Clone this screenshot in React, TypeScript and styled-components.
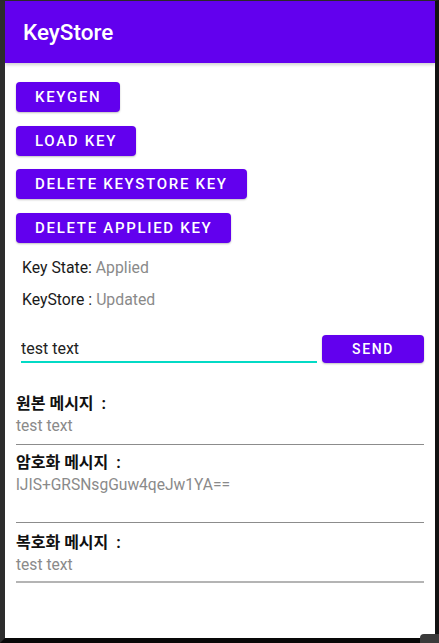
import React from "react";
import styled, { createGlobalStyle } from "styled-components";

const Global = createGlobalStyle`
  html, body {
    margin: 0;
    padding: 0;
    background: #161616;
  }
  body {
    width: 439px;
    height: 643px;
    overflow: hidden;
    font-family: Roboto, "Noto Sans CJK KR", "Noto Sans", sans-serif;
  }
`;

const Frame = styled.div`
  position: relative;
  box-sizing: border-box;
  width: 439px;
  height: 643px;
  border-top: 1px solid #2a2a2a;
  border-left: 5px solid #2d2d2d;
  border-right: 4px solid #121212;
  border-bottom: 5px solid #080808;
  display: flex;
  flex-direction: column;
`;

const Screen = styled.div`
  flex: 1;
  display: flex;
  flex-direction: column;
  background: #ffffff;
  overflow: hidden;
`;

const AppBar = styled.header`
  position: relative;
  z-index: 1;
  height: 62px;
  flex: none;
  display: flex;
  align-items: center;
  padding-left: 18px;
  background: #6200ee;
  color: #ffffff;
  font-family: Roboto, sans-serif;
  font-weight: 500;
  font-size: 22.5px;
  box-shadow: 0 2px 3px rgba(0, 0, 0, 0.18);
`;

const Content = styled.main`
  display: flex;
  flex-direction: column;
  padding: 19px 11px 0 11px;
`;

const ButtonColumn = styled.div`
  display: flex;
  flex-direction: column;
  align-items: flex-start;
  gap: 13.66px;
`;

const ActionButton = styled.button`
  height: 30px;
  padding: 0 19px;
  border: none;
  border-radius: 4px;
  background: #6200ee;
  color: #ffffff;
  font-family: Roboto, sans-serif;
  font-weight: 500;
  font-size: 15px;
  letter-spacing: 1.7px;
  text-transform: uppercase;
  box-shadow: 0 1px 2px rgba(0, 0, 0, 0.25);
  cursor: pointer;
`;

const StatusList = styled.div`
  display: flex;
  flex-direction: column;
  gap: 12px;
  margin-top: 15px;
  padding-left: 6px;
`;

const StatusLine = styled.div`
  line-height: 20px;
  font-size: 15.8px;
  color: #1a1a1a;
  font-family: Roboto, sans-serif;
`;

const StatusValue = styled.span`
  color: #8a8a8a;
`;

const InputRow = styled.div`
  display: flex;
  align-items: flex-start;
  gap: 5px;
  margin-top: 25px;
`;

const TextInput = styled.input`
  flex: 1;
  min-width: 0;
  height: 28px;
  box-sizing: border-box;
  margin: 0 0 0 5px;
  padding: 2px 0 0 0;
  border: none;
  border-bottom: 2px solid #03dac5;
  outline: none;
  background: transparent;
  font-family: Roboto, sans-serif;
  font-size: 16px;
  color: #222222;
`;

const SendButton = styled(ActionButton)`
  width: 102px;
  height: 28px;
  padding: 0;
  font-size: 14px;
  letter-spacing: 1.6px;
`;

const Field = styled.section<{ $top: number }>`
  display: flex;
  flex-direction: column;
  margin-top: ${(p) => p.$top}px;
`;

const FieldLabel = styled.div`
  line-height: 20px;
  font-size: 16px;
  font-weight: 700;
  color: #111111;
  font-family: Roboto, "Noto Sans CJK KR", sans-serif;
  white-space: pre;
`;

const FieldValue = styled.div`
  margin-top: 2px;
  line-height: 20px;
  font-size: 15.6px;
  color: #8a8a8a;
  font-family: Roboto, sans-serif;
`;

const Divider = styled.hr<{ $gap: number; $thick?: boolean }>`
  margin: ${(p) => p.$gap}px 0 0 0;
  border: none;
  height: ${(p) => (p.$thick ? 2 : 1)}px;
  background: ${(p) => (p.$thick ? "#b4b4b4" : "#8c8c8c")};
`;

const CornerTab = styled.div`
  position: absolute;
  right: -4px;
  bottom: -5px;
  width: 19px;
  height: 9px;
  background: #3a3a3a;
  border-top-left-radius: 4px;
`;

const fields = [
  { label: "원본 메시지  :", value: "test text", top: 31, gap: 8, thick: false },
  { label: "암호화 메시지  :", value: "lJIS+GRSNsgGuw4qeJw1YA==", top: 8, gap: 27, thick: false },
  { label: "복호화 메시지  :", value: "test text", top: 10, gap: 6, thick: true },
];

export default function App() {
  return (
    <>
      <Global />
      <Frame>
        <Screen>
          <AppBar>KeyStore</AppBar>
          <Content>
            <ButtonColumn>
              <ActionButton>Keygen</ActionButton>
              <ActionButton>Load Key</ActionButton>
              <ActionButton>Delete KeyStore Key</ActionButton>
              <ActionButton>Delete Applied Key</ActionButton>
            </ButtonColumn>
            <StatusList>
              <StatusLine>
                Key State: <StatusValue>Applied</StatusValue>
              </StatusLine>
              <StatusLine>
                KeyStore : <StatusValue>Updated</StatusValue>
              </StatusLine>
            </StatusList>
            <InputRow>
              <TextInput defaultValue="test text" />
              <SendButton>Send</SendButton>
            </InputRow>
            {fields.map((f) => (
              <Field key={f.label} $top={f.top}>
                <FieldLabel>{f.label}</FieldLabel>
                <FieldValue>{f.value}</FieldValue>
                <Divider $gap={f.gap} $thick={f.thick} />
              </Field>
            ))}
          </Content>
        </Screen>
        <CornerTab />
      </Frame>
    </>
  );
}
